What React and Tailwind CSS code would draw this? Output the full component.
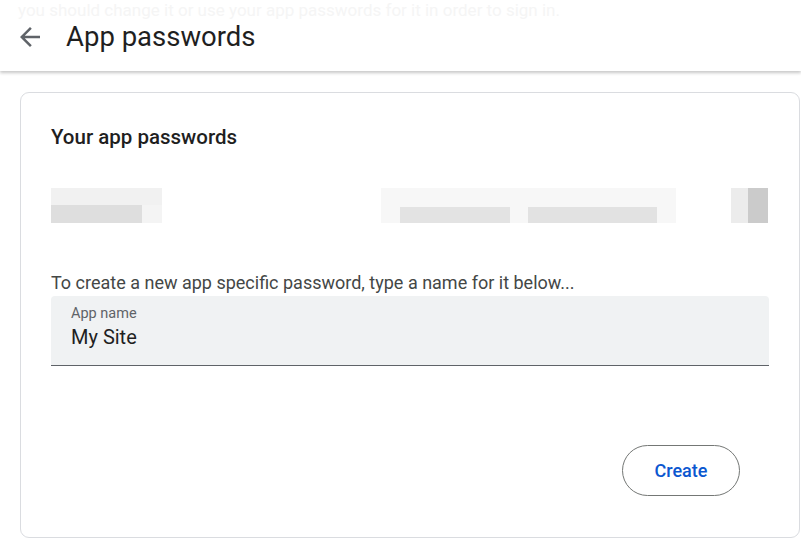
const font = { fontFamily: 'Roboto, "Liberation Sans", sans-serif' };

// Blurred/redacted entry in the password list.
function Smudge() {
  return (
    <div className="flex h-[35px] items-stretch">
      <div className="flex w-[111px] flex-col">
        <div className="h-[17px] bg-[#f1f1f1]" />
        <div className="flex flex-1">
          <div className="w-[91px] bg-[#dedede]" />
          <div className="flex-1 bg-[#f4f4f4]" />
        </div>
      </div>
      <div className="ml-[219px] flex w-[295px] flex-col bg-[#f7f7f7] px-[19px]">
        <div className="h-[19px]" />
        <div className="flex flex-1 gap-[18px]">
          <div className="w-[110px] bg-[#e3e3e3]" />
          <div className="w-[129px] bg-[#e2e2e2]" />
        </div>
      </div>
      <div className="ml-[55px] w-[17px] bg-[#ececec]" />
      <div className="w-[20px] bg-[#cbcbcb]" />
    </div>
  );
}

export default function App() {
  return (
    <div className="h-[539px] w-[801px] overflow-hidden bg-white text-[#1f1f1f]" style={font}>
      <header className="relative z-10 flex h-[71px] items-center bg-white pt-[2px] shadow-[0_2px_3px_rgba(0,0,0,0.22)]">
        <p className="absolute left-[18px] top-0 text-[17px] leading-[21px] whitespace-nowrap text-[#f5f5f5]">
          you should change it or use your app passwords for it in order to sign in.
        </p>
        <button className="relative ml-[15px] text-[#5f6368]">
          <svg width="30" height="30" viewBox="0 0 24 24" fill="currentColor">
            <path d="M20 11H7.83l5.59-5.59L12 4l-8 8 8 8 1.41-1.41L7.83 13H20v-2z" />
          </svg>
        </button>
        <h1 className="relative ml-[21px] text-[27.5px] leading-none">App passwords</h1>
      </header>

      <main className="pl-[20px] pr-[1px] pt-[21px]">
        <section className="h-[446px] rounded-[9px] border border-[#dadce0] px-[30px] pt-[30px]">
          <h2 className="text-[20.5px] font-medium leading-[28px]">Your app passwords</h2>

          <div className="mt-[37px]">
            <Smudge />
          </div>

          <p className="mt-[49px] text-[18px] leading-[22px] text-[#444746]">
            To create a new app specific password, type a name for it below...
          </p>

          <label className="mt-[2px] block h-[70px] rounded-t-[4px] border-b border-[#5f6368] bg-[#f0f2f3] px-[20px] pt-[9px]">
            <span className="block text-[14.5px] leading-[18px] text-[#5f6368]">App name</span>
            <input
              className="mt-[1px] w-full bg-transparent text-[20px] leading-[26px] text-[#1f1f1f] outline-none"
              defaultValue="My Site"
              style={font}
            />
          </label>

          <div className="mr-[29px] mt-[79px] flex justify-end">
            <button className="h-[51px] w-[118px] rounded-full border border-[#747775] text-[18px] font-medium text-[#0b57d0]">
              Create
            </button>
          </div>
        </section>
      </main>
    </div>
  );
}
